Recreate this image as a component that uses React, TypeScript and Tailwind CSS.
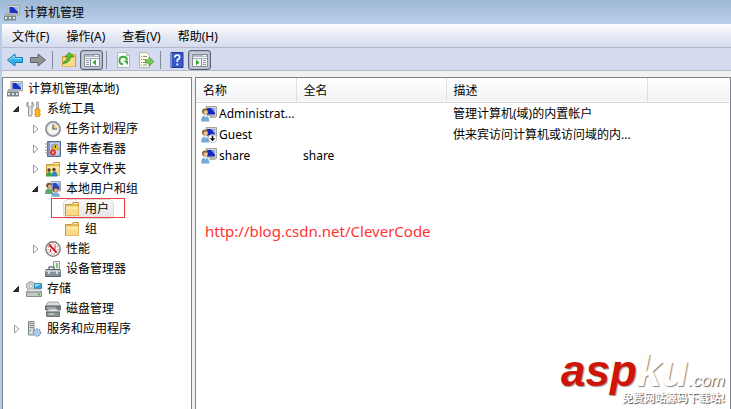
import React, { useState } from 'react';
import { clsx } from 'clsx';

interface TreeNode {
    id: string;
    label: string;
    icon: React.ReactNode;
    expandable?: boolean;
    marked?: boolean;
    children?: TreeNode[];
}

interface UserRow {
    name: string;
    fullName: string;
    description: string;
    disabled?: boolean;
}

const Icon: React.FC<{ children: React.ReactNode }> = ({ children }) => (
    <svg viewBox="0 0 16 16" className="w-4 h-4 shrink-0" aria-hidden="true">
        {children}
    </svg>
);

const ComputerIcon = () => (
    <Icon>
        <path d="M4 .5h11.5v9.5L4 9z" fill="#d9d8cf" stroke="#a4a49c" />
        <path d="M5.5 2h8.5v6.5l-8.5-.7z" fill="#1830c4" />
        <path d="M9 2h5v5z" fill="#8ab8f8" />
        <path d="M1 8h8l3 3v4H0v-4z" fill="#a8b0b4" />
        <path d="M0 11h12v4.5H0z" fill="#7b868d" />
        <path d="M1 12h2v2H1zM5 12h2v2H5zM9 12h2v2H9z" fill="#dce4e6" />
    </Icon>
);

const ToolsIcon = () => (
    <Icon>
        <path d="M2 1v4l2 1.5L6 5V1c2 1 2.500 4 0 6v7.500q-2 1.500-3.500 0V7C0 5 0 2 2 1z" fill="#e5e5e5" stroke="#777" strokeWidth=".8" />
        <path d="M10.500 1h2v7h-2z" fill="#c9c9c9" stroke="#7a7a7a" strokeWidth=".6" />
        <path d="M9.500 8h4l.8 2-1 1 1 2-1 2.500H9.700L8.800 13l1-2-1-1z" fill="#fbb914" stroke="#bd7a08" strokeWidth=".7" />
    </Icon>
);

const ClockIcon = () => (
    <Icon>
        <circle cx="8" cy="8" r="7.200" fill="#f8f6e9" stroke="#7f858c" strokeWidth="1.500" />
        <circle cx="8" cy="8" r="5.800" fill="none" stroke="#cdd6de" />
        <path d="M8 8V3.500A4.500 4.500 0 0 1 12.500 8z" fill="#f7d27a" />
        <path d="M8 3.500V8h4" fill="none" stroke="#4a5d7c" strokeWidth="1.200" />
    </Icon>
);

const EventIcon = () => (
    <Icon>
        <path d="M2.500.5h13v15h-13z" fill="#7f95c2" stroke="#566a99" />
        <path d="M5 1.500h9.500v13H5z" fill="#c9d7ee" />
        <path d="M6 4h7M6 6h3M6 8h3" stroke="#6c85b5" />
        <path d="M0 3h4M0 6h4M0 9h4M0 12h4" stroke="#8b8f98" />
        <path d="M10.500 2.500l3.500 6H7z" fill="#fdc91c" stroke="#b58609" strokeWidth=".6" />
        <path d="M10.500 4.500v2.500" stroke="#222" />
        <circle cx="8" cy="11.500" r="3" fill="#dd2f31" />
        <path d="M7 10.500l2 2m0-2l-2 2" stroke="#fff" strokeWidth=".9" />
    </Icon>
);

const FolderShape = () => (
    <>
        <path d="M1.500 3.500h6l1.500-2h5.500v13h-13z" fill="#e6bd55" stroke="#c69938" />
        <path d="M9.500 2.500h4" stroke="#fff7d0" />
        <path d="M2 5.500h12.500v9H2z" fill="#f8da88" />
        <path d="M2 5.500h12v3H2z" fill="#fde9a6" />
    </>
);

const FolderIcon = () => (
    <Icon>
        <FolderShape />
    </Icon>
);

const SharedFolderIcon = () => (
    <Icon>
        <FolderShape />
        <circle cx="4" cy="9" r="1.700" fill="#553c21" />
        <circle cx="9" cy="8.500" r="1.700" fill="#553c21" />
        <path d="M1 15.500q0-4.500 3-4.500t3 4.500z" fill="#35a548" />
        <path d="M6.500 15.500q0-5 3-5t3 5z" fill="#3288b4" />
    </Icon>
);

const GroupIcon = () => (
    <Icon>
        <path d="M6 .5h9.500v9.500L7 9z" fill="#d2d7dc" stroke="#9aa2aa" />
        <path d="M7.500 2h7v6.500h-7z" fill="#2746c9" />
        <path d="M11 2h3.500v4z" fill="#8db9f4" />
        <circle cx="4" cy="4.500" r="2.800" fill="#6b5436" />
        <circle cx="4.800" cy="5.200" r="1.800" fill="#e4b78c" />
        <path d="M0 13q0-5.500 4-5.500T8 13z" fill="#62a56c" />
        <circle cx="10.500" cy="8.500" r="2.800" fill="#614227" />
        <circle cx="10.800" cy="9.200" r="1.800" fill="#e6b78f" />
        <path d="M6 15.800q.5-4.500 4.500-4.500t4.500 4.500z" fill="#7faad7" />
    </Icon>
);

const GaugeIcon = () => (
    <Icon>
        <circle cx="8" cy="8" r="7.200" fill="#fff" stroke="#7a7a7a" strokeWidth="1.400" />
        <circle cx="8" cy="8" r="4.900" fill="none" stroke="#d8a3a3" strokeDasharray="1.500 1.200" strokeWidth="1.600" />
        <path d="M4 3.500l7.500 8" stroke="#d41c1c" strokeWidth="1.900" />
        <path d="M10 4.500v4M5.500 8v3" stroke="#a92525" />
    </Icon>
);

const DeviceIcon = () => (
    <Icon>
        <path d="M8.500.5h6v8h-6z" fill="#e9eeef" stroke="#929a9e" />
        <path d="M12 2v5" stroke="#51ba4b" strokeWidth="1.500" />
        <path d="M4 8.500V6h5v2.500" fill="none" stroke="#6c7880" strokeWidth="1.300" />
        <path d="M1 8.500h14l.5 7H.5z" fill="#84949e" stroke="#556570" />
        <path d="M1 9h14v2H1z" fill="#b9c7cf" />
        <path d="M4 10v3m8-3v3" stroke="#e9eef0" strokeWidth="1.500" />
    </Icon>
);

const StorageIcon = () => (
    <Icon>
        <ellipse cx="5" cy="5" rx="4.700" ry="4.300" fill="#cfd3d6" stroke="#858b90" strokeWidth=".8" />
        <circle cx="5" cy="5" r="1.500" fill="#fff" stroke="#959ba0" strokeWidth=".6" />
        <path d="M8.500 2.500h7v5h-7z" fill="#35a3db" stroke="#2572a5" strokeWidth=".8" />
        <path d="M9 3h6L9 6z" fill="#9cdbf6" />
        <path d="M2.500 8h11l2 3H.5z" fill="#e5e8e9" stroke="#92989b" strokeWidth=".7" />
        <path d="M.5 11h15v4.500H.5z" fill="#c3c8ca" stroke="#70777b" strokeWidth=".8" />
        <path d="M12 12.500h2v2h-2z" fill="#42c72d" />
    </Icon>
);

const DiskIcon = () => (
    <Icon>
        <path d="M3 1h10l2.500 4H.5z" fill="#dadcdd" stroke="#92979a" strokeWidth=".8" />
        <path d="M.5 5h15v4H.5z" fill="#777e82" stroke="#53595c" strokeWidth=".7" />
        <path d="M2 7h9" stroke="#d6d9da" />
        <path d="M4 8h8l2.500 3h-13z" fill="#e4e5e5" stroke="#8d9295" strokeWidth=".7" />
        <path d="M1.500 11h13v4.500h-13z" fill="#8b9295" stroke="#575d60" strokeWidth=".8" />
        <path d="M3.500 13h6" stroke="#e2e4e5" />
        <path d="M12 12h1.500v1.500H12z" fill="#48c334" />
    </Icon>
);

const ServicesIcon = () => (
    <Icon>
        <path d="M2.500.5H8v13.500H2.500z" fill="#d6d9db" stroke="#7e8589" />
        <path d="M3.500 2.500H7M3.500 4.500H7M3.500 6.500H7" stroke="#848b90" />
        <path d="M3.500 9.500h1.500" stroke="#47b53b" />
        <circle cx="11" cy="11.500" r="3.300" fill="#c7dcee" stroke="#6592bd" strokeWidth="1.800" strokeDasharray="1.400 1" />
        <circle cx="11" cy="11.500" r="2.700" fill="#b8d3ea" />
        <circle cx="11" cy="11.500" r="1.200" fill="#fff" stroke="#6a91b6" strokeWidth=".6" />
    </Icon>
);

const UserIcon: React.FC<{ disabled?: boolean }> = ({ disabled }) => (
    <Icon>
        <path d="M5 .5h10.500v10L6 9z" fill="#d7d6cd" stroke="#a5a59d" />
        <path d="M6 2h8v6.500H6z" fill="#1727bb" />
        <path d="M10 2h4v5z" fill="#7caaf5" />
        <path d="M9 10h4l2 2H8z" fill="#b2b3af" />
        <circle cx="4" cy="5.500" r="3" fill="#836240" />
        <circle cx="4.700" cy="6.300" r="2.100" fill="#edc094" />
        <path d="M.2 15.500Q0 9.500 4 9.500t4.500 6z" fill="#71a9d9" />
        <path d="M3 9.700l1.500 2L6 9.700z" fill="#e8f2fa" />
        {disabled && (
            <>
                <circle cx="11.500" cy="11.500" r="4.200" fill="#fff" stroke="#9a9a9a" strokeWidth=".6" />
                <path d="M11.500 8.500v3.500" stroke="#111" strokeWidth="1.600" />
                <path d="M8.700 11.300h5.600l-2.800 3z" fill="#111" />
            </>
        )}
    </Icon>
);

const ArrowIcon: React.FC<{ forward?: boolean }> = ({ forward }) => (
    <Icon>
        {forward ? (
            <path d="M.5 5.500h7.500V2l7.500 6L8 14v-3.500H.5z" fill="#929292" stroke="#5f6266" />
        ) : (
            <>
                <path d="M15.500 5.500H8V2L.5 8 8 14v-3.500h7.500z" fill="#35b0ef" stroke="#1677b8" />
                <path d="M14.500 6.500H7V4L2 8" fill="none" stroke="#a5e3ff" />
            </>
        )}
    </Icon>
);

const UpFolderIcon = () => (
    <Icon>
        <path d="M1.500 4.500h5L8 2.500h6.500v12h-13z" fill="#eec765" stroke="#c99d41" />
        <path d="M2 6.500h12v8H2z" fill="#f9dc90" />
        <path d="M2.500 10Q6.500 9 6.500 4.500H4L8.500.5l4 4H9.500q0 6-7 7z" fill="#59c42e" stroke="#31881a" strokeWidth=".8" />
    </Icon>
);

const PaneIcon: React.FC<{ side: 'left' | 'right' }> = ({ side }) => (
    <Icon>
        <path d="M.5 2.500h15v12H.5z" fill="#f7f8fa" stroke="#838b98" />
        <path d="M1 3h14v2H1z" fill="#b4bbc7" />
        <path d="M11 3.500h3" stroke="#fff" />
        <path d="M1 6.500h14" stroke="#a6adb9" />
        {side === 'left' ? (
            <>
                <path d="M6.500 7v7.500" stroke="#858d99" />
                <path d="M2 8.500h3M2 10.500h3M2 12.500h3" stroke="#8d95a2" />
                <path d="M12 7.500v6L8.500 10.500z" fill="#34a823" />
            </>
        ) : (
            <>
                <path d="M9.500 7v7.500" stroke="#858d99" />
                <path d="M11 8.500h3M11 10.500h3M11 12.500h3" stroke="#8d95a2" />
                <path d="M4 7.500v6L7.500 10.500z" fill="#34a823" />
            </>
        )}
    </Icon>
);

const RefreshIcon = () => (
    <Icon>
        <path d="M2.500.5h9l3 3v12h-12z" fill="#fcfcfc" stroke="#b4b6b9" />
        <path d="M11.500.5v3h3" fill="#dedede" stroke="#b4b6b9" />
        <path d="M8 12.300A3.800 3.800 0 1 1 12 8" fill="none" stroke="#38a938" strokeWidth="1.900" />
        <path d="M8.500 8.500H13V13z" fill="#38a938" />
    </Icon>
);

const ExportIcon = () => (
    <Icon>
        <path d="M1.500.5h7l3 3v12h-10z" fill="#fffbe9" stroke="#b9b7aa" />
        <path d="M3 4.500h1m1 0h4M3 7.500h1m1 0h3M3 10.500h1m1 0h3M3 13h1m1 0h4" stroke="#8e8e88" />
        <path d="M7.500 8H11V5l4.800 4.500L11 14v-3H7.500z" fill="#72cf4f" stroke="#3c9b28" strokeWidth=".8" />
    </Icon>
);

const HelpIcon = () => (
    <Icon>
        <path d="M2 .5h12v15H2z" fill="#3657c4" stroke="#213b93" />
        <path d="M2.500 1v14" stroke="#7a94e6" />
        <path d="M5.800 5.500q0-2.500 2.400-2.500t2.400 2.300Q10.600 7 8.300 8v2" fill="none" stroke="#fff" strokeWidth="1.700" />
        <path d="M7.400 11.500h1.900v1.800H7.400z" fill="#fff" />
    </Icon>
);

const menus = ['文件(F)', '操作(A)', '查看(V)', '帮助(H)'];

const tree: TreeNode[] = [
    {
        id: 'tools',
        label: '系统工具',
        icon: <ToolsIcon />,
        expandable: true,
        children: [
            { id: 'tasks', label: '任务计划程序', icon: <ClockIcon />, expandable: true },
            { id: 'events', label: '事件查看器', icon: <EventIcon />, expandable: true },
            { id: 'shared', label: '共享文件夹', icon: <SharedFolderIcon />, expandable: true },
            {
                id: 'local',
                label: '本地用户和组',
                icon: <GroupIcon />,
                expandable: true,
                children: [
                    { id: 'users', label: '用户', icon: <FolderIcon />, marked: true },
                    { id: 'groups', label: '组', icon: <FolderIcon /> },
                ],
            },
            { id: 'perf', label: '性能', icon: <GaugeIcon />, expandable: true },
            { id: 'devices', label: '设备管理器', icon: <DeviceIcon /> },
        ],
    },
    {
        id: 'storage',
        label: '存储',
        icon: <StorageIcon />,
        expandable: true,
        children: [{ id: 'disks', label: '磁盘管理', icon: <DiskIcon /> }],
    },
    { id: 'services', label: '服务和应用程序', icon: <ServicesIcon />, expandable: true },
];

const users: UserRow[] = [
    { name: 'Administrat...', fullName: '', description: '管理计算机(域)的内置帐户' },
    { name: 'Guest', fullName: '', description: '供来宾访问计算机或访问域的内...', disabled: true },
    { name: 'share', fullName: 'share', description: '' },
];

const Expander: React.FC<{ open: boolean }> = ({ open }) => (
    <svg viewBox="0 0 10 10" className="w-2.5 h-2.5" aria-hidden="true">
        {open ? (
            <path d="M7.500 2.500v5h-5z" fill="#333" stroke="#222" />
        ) : (
            <path d="M3.500 1v8L8 5z" fill="#fff" stroke="#9b9b9b" />
        )}
    </svg>
);

interface TreeItemProps {
    node: TreeNode;
    selected: string;
    onSelect: (id: string) => void;
}

const TreeItem: React.FC<TreeItemProps> = ({ node, selected, onSelect }) => {
    const [open, setOpen] = useState(Boolean(node.children));

    return (
        <li>
            <div className="relative flex items-center h-5">
                <div className="w-[15px] shrink-0 flex">
                    {node.expandable && (
                        <button aria-label={`展开 ${node.label}`} onClick={() => setOpen(!open)}>
                            <Expander open={open && Boolean(node.children)} />
                        </button>
                    )}
                </div>
                <button
                    onClick={() => onSelect(node.id)}
                    className={clsx(
                        'flex items-center gap-[5px] h-[18px] pr-1 rounded-sm whitespace-nowrap',
                        selected === node.id && 'bg-linear-to-b from-[#f8f8f8] to-[#e5e5e5] outline outline-[#dadada]'
                    )}
                >
                    {node.icon}
                    {node.label}
                </button>
                {node.marked && (
                    <div className="absolute left-0.5 -top-px w-[74px] h-5 border border-[#f03c3c] pointer-events-none" />
                )}
            </div>
            {open && node.children && (
                <ul className="pl-[19px]">
                    {node.children.map(child => (
                        <TreeItem key={child.id} node={child} selected={selected} onSelect={onSelect} />
                    ))}
                </ul>
            )}
        </li>
    );
};

const ToolButton: React.FC<{ label: string; pressed?: boolean; children: React.ReactNode }> = ({
    label,
    pressed,
    children
}) => (
    <button
        aria-label={label}
        className={clsx(
            'flex items-center justify-center w-[23px] h-5 rounded-[3px]',
            pressed && 'border border-[#5c6272] bg-[#c8cedd] shadow-[inset_0_0_2px_#777f92]'
        )}
    >
        {children}
    </button>
);

const ToolGroup: React.FC<{ children: React.ReactNode }> = ({ children }) => (
    <div className="flex pl-1 pr-[3px]">{children}</div>
);

const Divider = () => <div className="w-px h-[18px] bg-[#858b9b]" />;

const Watermark = () => (
    <div className="absolute right-1.5 bottom-0 select-none pointer-events-none font-['Liberation_Sans',sans-serif] italic">
        <div className="flex items-baseline justify-end h-10 leading-10">
            <span className="text-[44px] font-bold text-[#cf1507] [text-shadow:1px_1px_1px_#999]">asp</span>
            <span className="text-[44px] font-bold text-[#fffefa] [text-shadow:1px_1px_1px_#888]">ku</span>
            <span className="text-[17px] text-[#fffefa] [text-shadow:1px_1px_1px_#555]">.com</span>
        </div>
        <div className="text-right text-[11px] leading-4 -mt-0.5 pb-1 not-italic font-bold text-white font-['Noto_Sans_CJK_SC',sans-serif] [text-shadow:1px_1px_1px_#555]">
            免费网站源码下载站!
        </div>
    </div>
);

export default function App() {
    const [selected, setSelected] = useState('users');

    return (
        <div className="relative min-h-screen flex flex-col overflow-hidden bg-[#b5cdea] text-black text-xs font-['Noto_Sans','Noto_Sans_CJK_SC',sans-serif]">
            <header className="flex items-center gap-1 h-6 pl-1 pt-px bg-linear-to-b from-[#9fb9d5] to-[#b8cfe9]">
                <ComputerIcon />
                <h1>计算机管理</h1>
            </header>

            <nav className="flex items-center gap-[17px] h-6 ml-0.5 pl-2.5 pt-0.5 border-b border-[#b4b8cc] bg-linear-to-b from-white via-[#e7ebf5] to-[#d4dbed]">
                {menus.map(menu => (
                    <button key={menu}>{menu}</button>
                ))}
            </nav>

            <div className="flex items-center h-[23px] ml-0.5 pt-0.5 border-b border-[#b4b8cc] bg-[#d4dbee]">
                <div className="flex pl-px pr-[3px]">
                    <ToolButton label="后退"><ArrowIcon /></ToolButton>
                    <ToolButton label="前进"><ArrowIcon forward /></ToolButton>
                </div>
                <Divider />
                <ToolGroup>
                    <ToolButton label="上一级"><UpFolderIcon /></ToolButton>
                    <ToolButton label="显示/隐藏控制台树" pressed><PaneIcon side="left" /></ToolButton>
                </ToolGroup>
                <Divider />
                <ToolGroup>
                    <ToolButton label="刷新"><RefreshIcon /></ToolButton>
                    <ToolButton label="导出列表"><ExportIcon /></ToolButton>
                </ToolGroup>
                <Divider />
                <ToolGroup>
                    <ToolButton label="帮助"><HelpIcon /></ToolButton>
                    <ToolButton label="显示/隐藏操作窗格" pressed><PaneIcon side="right" /></ToolButton>
                </ToolGroup>
            </div>

            <main className="flex-1 flex gap-[3px] ml-0.5 pt-1.5 bg-[#f0f0f0]">
                <aside className="w-[190px] shrink-0 pt-px border border-b-0 border-[#82828c] bg-white">
                    <button className="flex items-center gap-[5px] h-5 pl-1">
                        <ComputerIcon />
                        计算机管理(本地)
                    </button>
                    <ul className="pl-2">
                        {tree.map(node => (
                            <TreeItem key={node.id} node={node} selected={selected} onSelect={setSelected} />
                        ))}
                    </ul>
                </aside>

                <section className="flex-1 min-w-0 border border-b-0 border-[#82828c] bg-white">
                    <table className="w-full table-fixed border-collapse text-left">
                        <colgroup>
                            <col className="w-[100px]" />
                            <col className="w-[150px]" />
                            <col className="w-[201px]" />
                            <col />
                        </colgroup>
                        <thead>
                            <tr className="h-6 border-b border-[#d5d5d5] bg-linear-to-b from-white to-[#f1f2f4]">
                                <th className="pl-[7px] pt-0.5 font-normal border-r border-[#dfe0e2]">名称</th>
                                <th className="pl-[7px] pt-0.5 font-normal border-r border-[#dfe0e2]">全名</th>
                                <th className="pl-[7px] pt-0.5 font-normal border-r border-[#dfe0e2]">描述</th>
                                <td />
                            </tr>
                        </thead>
                        <tbody>
                            {users.map(user => (
                                <tr key={user.name} className="h-[21px] whitespace-nowrap">
                                    <td className="pl-[5px] pt-0.5">
                                        <div className="flex items-center gap-0.5">
                                            <UserIcon disabled={user.disabled} />
                                            {user.name}
                                        </div>
                                    </td>
                                    <td className="pl-[7px] pt-0.5">{user.fullName}</td>
                                    <td className="pl-[7px] pt-0.5">{user.description}</td>
                                    <td />
                                </tr>
                            ))}
                        </tbody>
                    </table>
                    <a
                        href="http://blog.csdn.net/CleverCode"
                        className="inline-block mt-[54px] ml-[9px] text-[15px] leading-6 text-[#ff3333]"
                    >
                        http://blog.csdn.net/CleverCode
                    </a>
                </section>
            </main>
            <Watermark />
        </div>
    );
}
